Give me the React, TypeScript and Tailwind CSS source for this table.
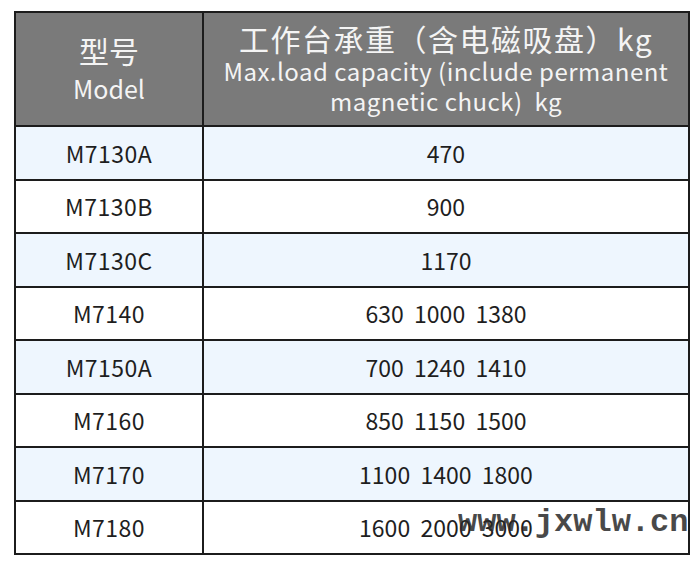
import React from 'react';

const rows = [
  { model: 'M7130A', load: '470' },
  { model: 'M7130B', load: '900' },
  { model: 'M7130C', load: '1170' },
  { model: 'M7140', load: '630  1000  1380' },
  { model: 'M7150A', load: '700  1240  1410' },
  { model: 'M7160', load: '850  1150  1500' },
  { model: 'M7170', load: '1100  1400  1800' },
  { model: 'M7180', load: '1600  2000  3000' },
];

const font = { fontFamily: '"Noto Sans CJK SC", "Noto Sans", sans-serif' };

export default function App() {
  return (
    <div className="relative w-[700px] h-[567px] bg-white pt-[11px] pl-[14px]" style={font}>
      <table className="border-collapse w-[676px] table-fixed text-[#1e1e1e]">
        <colgroup>
          <col className="w-[188px]" />
          <col />
        </colgroup>
        <thead>
          <tr className="h-[114px] bg-[#7a7a7a] text-[#f4f4f4]">
            <th className="border-2 border-[#1c1c1c] font-normal align-middle">
              <div className="text-[30px] leading-[36px] -mt-[2px]">型号</div>
              <div className="text-[25px] leading-[32px] mt-[4px]">Model</div>
            </th>
            <th className="border-2 border-[#1c1c1c] font-normal align-middle">
              <div className="text-[30px] leading-[36px] tracking-[1.5px] whitespace-nowrap -mt-[3px]">工作台承重（含电磁吸盘）kg</div>
              <div className="text-[24px] leading-[30px] tracking-[0.5px] whitespace-nowrap">Max.load capacity (include permanent</div>
              <div className="text-[24px] leading-[30px] tracking-[0.5px] whitespace-nowrap">magnetic chuck)&nbsp; kg</div>
            </th>
          </tr>
        </thead>
        <tbody>
          {rows.map((r, i) => (
            <tr key={r.model} className={i % 2 === 0 ? 'h-[53.5px] bg-[#eef6fe]' : 'h-[53.5px] bg-white'}>
              <td className="border-2 border-[#1c1c1c] text-center text-[23px] tracking-[0.5px]">{r.model}</td>
              <td className="border-2 border-[#1c1c1c] text-center text-[23px] whitespace-pre">{r.load}</td>
            </tr>
          ))}
        </tbody>
      </table>
      <div
        className="absolute left-[458px] top-[503px] text-[32px] leading-[40px] font-bold text-[#2a2a2a] opacity-85 whitespace-nowrap"
        style={{ fontFamily: '"Liberation Mono", monospace' }}
      >
        www.jxwlw.cn
      </div>
    </div>
  );
}
